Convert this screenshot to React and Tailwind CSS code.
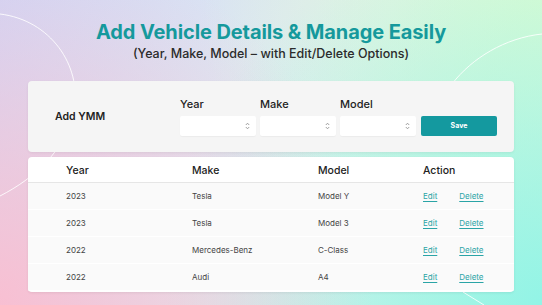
import React from 'react';

const rows = [
  { year: '2023', make: 'Tesla', model: 'Model Y' },
  { year: '2023', make: 'Tesla', model: 'Model 3' },
  { year: '2022', make: 'Mercedes-Benz', model: 'C-Class' },
  { year: '2022', make: 'Audi', model: 'A4' },
];

function SelectBox({ label }) {
  return (
    <div className="flex flex-col w-[76px]">
      <span className="text-[11px] font-medium text-[#222] leading-none mb-[6px]">{label}</span>
      <div className="h-[20px] bg-white rounded-[2px] shadow-[0_1px_1px_rgba(0,0,0,0.04)] flex items-center justify-end pr-[6px]">
        <svg width="5" height="8" viewBox="0 0 5 8" fill="none" stroke="#8a8a8a" strokeWidth="0.8">
          <path d="M0.8 3 L2.5 1.2 L4.2 3" />
          <path d="M0.8 5 L2.5 6.8 L4.2 5" />
        </svg>
      </div>
    </div>
  );
}

export default function App() {
  const cols = "grid grid-cols-[126px_126px_105px_1fr] items-center";

  return (
    <div className="relative w-[542px] h-[305px] overflow-hidden font-['Inter',sans-serif] bg-[radial-gradient(circle_at_0%_100%,#f8bfd2,transparent_60%),radial-gradient(circle_at_100%_100%,#92f4e6,transparent_62%),radial-gradient(circle_at_100%_0%,#defbd2,transparent_55%),linear-gradient(120deg,#cfd6f6,#e2edf1_55%,#d8f8e0)]">
      {/* decorative arcs */}
      <svg className="absolute inset-0 pointer-events-none" width="542" height="305" fill="none">
        <path d="M0 14 C 50 20, 82 65, 74 110 C 66 150, 35 178, 0 196" stroke="rgba(255,255,255,0.85)" strokeWidth="1" />
        <path d="M542 34 C 505 38, 472 58, 452 84" stroke="rgba(255,255,255,0.85)" strokeWidth="1" />
        <path d="M463 292 L 484 305" stroke="rgba(255,255,255,0.85)" strokeWidth="1" />
      </svg>

      <div className="relative flex flex-col items-center">
        <h1 className="mt-[19px] text-[20px] leading-[26px] font-bold text-[#15999c] tracking-[-0.1px]">
          Add Vehicle Details &amp; Manage Easily
        </h1>
        <p className="mt-0 text-[12.5px] leading-[18px] font-medium text-[#2b2b2b]">
          (Year, Make, Model – with Edit/Delete Options)
        </p>
      </div>

      <div className="relative mx-[28px] mt-[18px] h-[71px] bg-[#f5f5f5] rounded-[4px] shadow-[0_1px_3px_rgba(0,0,0,0.06)] flex items-center pl-[27px] pr-[17px]">
        <span className="w-[125px] text-[10.5px] font-semibold text-[#222]">Add YMM</span>
        <div className="flex items-end gap-[4px] pt-[2px]">
          <SelectBox label="Year" />
          <SelectBox label="Make" />
          <SelectBox label="Model" />
          <button className="ml-[1px] w-[76px] h-[20px] bg-[#14999f] rounded-[2px] text-white text-[7px] font-bold">
            Save
          </button>
        </div>
      </div>

      <div className="relative mx-[28px] mt-[5px] bg-white rounded-[4px] shadow-[0_1px_3px_rgba(0,0,0,0.07)] overflow-hidden pb-[1px]">
        <div className={`${cols} h-[26px] pt-[2px] pl-[38px] border-b border-[#e6e6e6] text-[10.5px] font-medium text-[#222]`}>
          <span>Year</span>
          <span>Make</span>
          <span>Model</span>
          <span>Action</span>
        </div>
        {rows.map((r, i) => (
          <div key={i} className={`${cols} h-[27px] pl-[38px] bg-[#fafafa] border-b border-white text-[8px] text-[#444]`}>
            <span>{r.year}</span>
            <span>{r.make}</span>
            <span>{r.model}</span>
            <div className="flex gap-[22px] text-[#2aa4a6]">
              <a className="underline underline-offset-2">Edit</a>
              <a className="underline underline-offset-2">Delete</a>
            </div>
          </div>
        ))}
      </div>
    </div>
  );
}
